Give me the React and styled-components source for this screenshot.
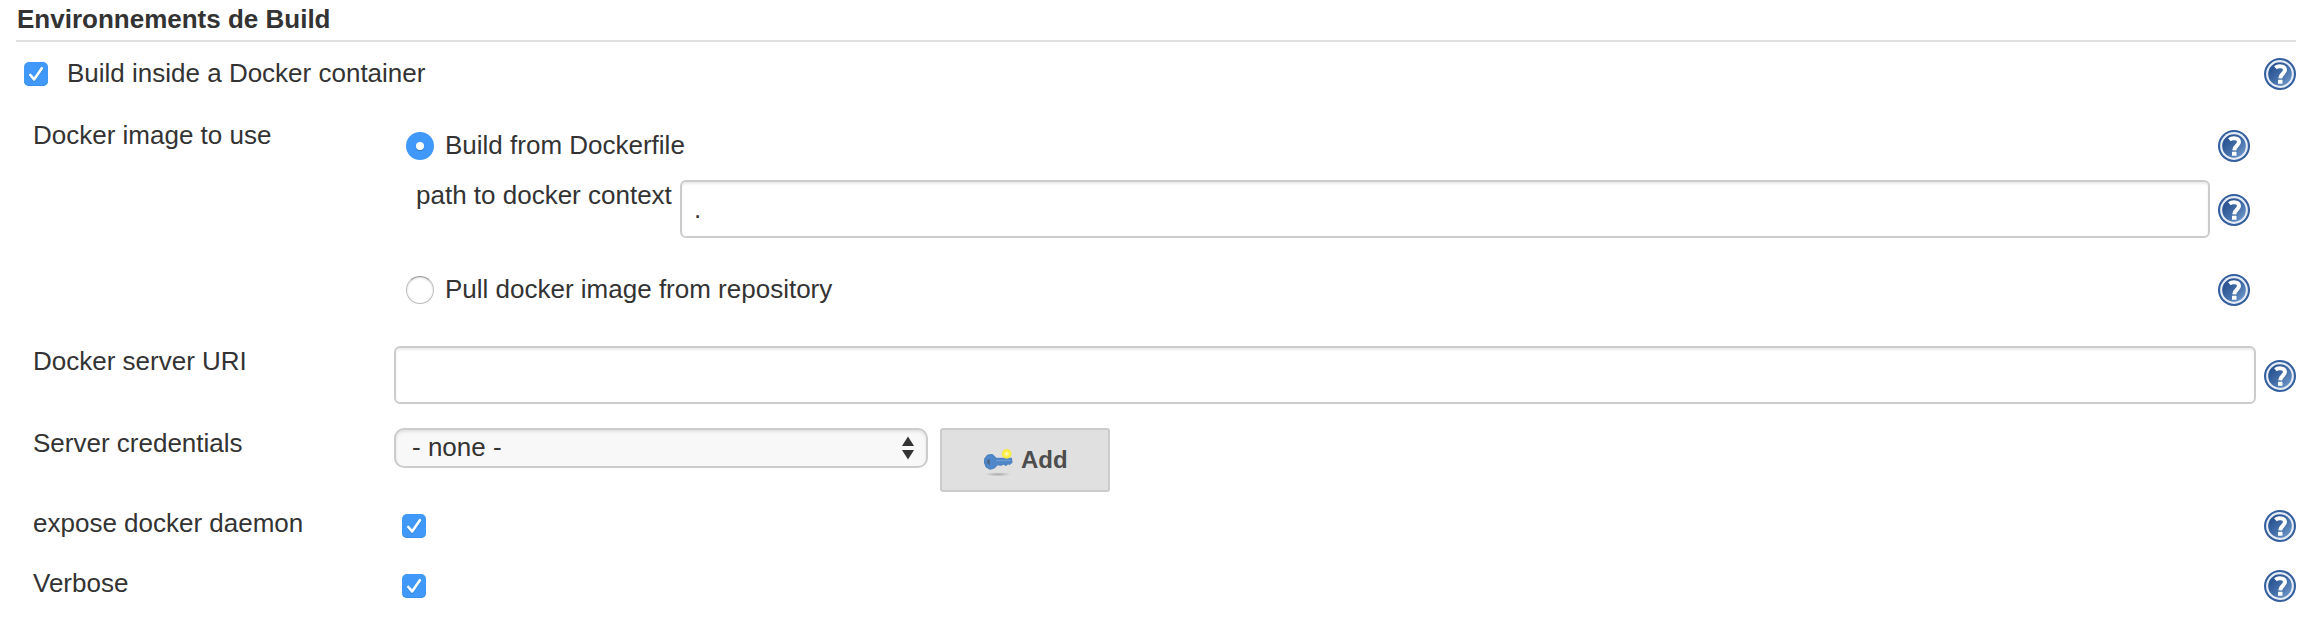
import React from "react";
import styled, { createGlobalStyle } from "styled-components";

const GlobalStyle = createGlobalStyle`
  *, *::before, *::after { box-sizing: border-box; }
  body {
    margin: 0;
    background: #fff;
    color: #333;
    font: 26px/30px "Liberation Sans", Helvetica, Arial, sans-serif;
  }
`;

const Page = styled.main`
  display: flex;
  flex-direction: column;
  height: 636px;
  padding: 0 22px 0 16px;
`;

const SectionHeader = styled.h2`
  margin: 0;
  height: 42px;
  padding: 4px 0 0 1px;
  border-bottom: 2px solid #e0e0e0;
  font-size: 26px;
  line-height: 30px;
  font-weight: bold;
`;

const ToggleRow = styled.div`
  display: flex;
  align-items: flex-start;
  height: 78px;
  padding: 16px 0 0 8px;
`;

const ToggleLabel = styled.label`
  flex: 1;
  display: flex;
  align-items: flex-start;
  gap: 19px;
`;

const Row = styled.div`
  display: grid;
  grid-template-columns: 361px minmax(0, 1fr) 40px;
  align-items: start;
  height: ${(p) => p.$height}px;
  padding-left: 17px;
`;

const Label = styled.span`
  white-space: nowrap;
`;

const HelpCell = styled.div`
  display: flex;
  flex: none;
  justify-content: flex-end;
  width: 40px;
  padding-top: ${(p) => p.$top || 0}px;
`;

const HelpSvg = styled.svg`
  display: block;
  width: 32px;
  height: 32px;
`;

const CheckBox = styled.span`
  display: block;
  width: 24px;
  height: 24px;
  margin: ${(p) => p.$margin || "0"};
  border-radius: 5px;
  background: #4099f8;
  box-shadow: inset 0 -1px 0 #3b8eed;

  svg { display: block; }
`;

const ImageOptions = styled.div`
  grid-column: 2 / 4;
  display: flex;
  flex-direction: column;
  padding: 10px 46px 0 0;
`;

const Option = styled.div`
  display: flex;
  align-items: flex-start;
  height: 50px;
  padding-left: 12px;
`;

const OptionLabel = styled.label`
  flex: 1;
  display: flex;
  gap: 11px;
`;

const Radio = styled.span`
  display: grid;
  place-items: center;
  width: 28px;
  height: 28px;
  margin-top: 2px;
  border-radius: 50%;
  background: ${(p) => (p.$checked ? "#4099f8" : "#fff")};
  border: ${(p) => (p.$checked ? "0" : "1px solid #bcbcbc")};
  border-top-color: #999;
  box-shadow: ${(p) => (p.$checked ? "none" : "inset 0 1px 2px #ddd")};

  &::after {
    content: "";
    width: 8px;
    height: 8px;
    border-radius: 50%;
    background: #fff;
    box-shadow: ${(p) => (p.$checked ? "0 1px 1px #2f78ca" : "none")};
  }
`;

const ContextRow = styled.div`
  display: flex;
  align-items: flex-start;
  height: 94px;
  padding-left: 22px;
`;

const ContextLabel = styled.span`
  flex: none;
  width: 264px;
  white-space: nowrap;
`;

const TextInput = styled.input`
  flex: 1;
  min-width: 0;
  width: 100%;
  height: 58px;
  padding: 12px;
  border: 2px solid #ccc;
  border-radius: 6px;
  outline: 0;
  background: #fff;
  box-shadow: inset 0 2px 2px rgba(0, 0, 0, 0.075);
  color: #333;
  font: 26px/30px "Liberation Sans", Helvetica, Arial, sans-serif;
`;

const Credentials = styled.div`
  display: flex;
  align-items: flex-start;
  gap: 12px;
`;

const SelectBox = styled.div`
  display: flex;
  justify-content: space-between;
  width: 534px;
  height: 40px;
  padding: 2px 12px 0 16px;
  border: 2px solid #ccc;
  border-radius: 10px;
  background: #f8f8f8;
  box-shadow: inset 0 2px 3px rgba(0, 0, 0, 0.09);

  svg { margin-top: 4px; }
`;

const AddButton = styled.button`
  display: flex;
  align-items: flex-start;
  width: 170px;
  height: 64px;
  padding: 14px 0 0 40px;
  border: 2px solid #ccc;
  border-radius: 3px;
  background: #e0e0e0;
  color: #4d4d4d;
  font: bold 24px/28px "Liberation Sans", Helvetica, Arial, sans-serif;

  span { padding: 2px 0 0 7px; }
`;

function Help() {
  return (
    <HelpSvg viewBox="0 0 32 32" role="img" aria-label="Help">
      <defs>
        <linearGradient id="helpFill" x1="0" y1="0" x2="1" y2="1">
          <stop offset="0.2" stopColor="#2c5593" />
          <stop offset="0.55" stopColor="#446fa9" />
          <stop offset="1" stopColor="#7ba3d0" />
        </linearGradient>
      </defs>
      <circle cx="16" cy="16" r="16" fill="#34609f" />
      <circle cx="16" cy="16" r="13.9" fill="#e6edf6" />
      <circle cx="16" cy="16" r="11.8" fill="url(#helpFill)" />
      <path
        d="M11.4 9.8C13.8 7.7 21 7.3 21 12.1C21 15.4 16.5 15.6 16.2 20.4"
        fill="none"
        stroke="#fff"
        strokeWidth="4"
      />
      <rect x="14" y="21.8" width="4.5" height="4" rx="0.6" fill="#fff" />
    </HelpSvg>
  );
}

function Check({ margin }) {
  return (
    <CheckBox $margin={margin} role="checkbox" aria-checked="true">
      <svg width="24" height="24" viewBox="0 0 24 24" fill="none" strokeLinecap="round" strokeLinejoin="round" strokeWidth="2.6">
        <path d="M6.3 14.3L10.1 18.7L17.9 7.4" stroke="#347fd2" strokeOpacity="0.6" />
        <path d="M6.3 13L10.1 17.4L17.9 6.2" stroke="#fff" />
      </svg>
    </CheckBox>
  );
}

function KeyIcon() {
  return (
    <svg width="32" height="32" viewBox="0 0 32 32" aria-hidden="true">
      <defs>
        <radialGradient id="keyShadow">
          <stop offset="0" stopColor="#999" stopOpacity="0.8" />
          <stop offset="1" stopColor="#999" stopOpacity="0" />
        </radialGradient>
        <radialGradient id="keySpark">
          <stop offset="0" stopColor="#fffce0" />
          <stop offset="0.45" stopColor="#fff04a" />
          <stop offset="0.8" stopColor="#f8e943" />
          <stop offset="1" stopColor="#f4e64a" stopOpacity="0" />
        </radialGradient>
      </defs>
      <ellipse cx="16" cy="30.3" rx="13" ry="2" fill="url(#keyShadow)" />
      <path
        d="M2.7 14.5L5.5 11L10.5 10.5L14.5 14.3H29.5L30 18.5L28 20.5L26 19.8L24 21.5L21.5 20.3L19 21.3L15.5 20.8L12.5 24L8 25.3L4 23L2.5 19Z"
        fill="#4f87c8"
        stroke="#3f78b9"
        strokeWidth="0.9"
        strokeLinejoin="round"
      />
      <path d="M14 16.5H28" stroke="#6b9cd5" strokeWidth="1.3" />
      <path d="M4.8 16.5L7.8 15V21L5.5 20Z" fill="#4b6787" />
      <circle cx="24.7" cy="9.8" r="5.4" fill="url(#keySpark)" />
    </svg>
  );
}

export default function App() {
  return (
    <>
      <GlobalStyle />
      <Page>
        <SectionHeader>Environnements de Build</SectionHeader>
        <ToggleRow>
          <ToggleLabel>
            <Check margin="4px 0 0" />
            Build inside a Docker container
          </ToggleLabel>
          <HelpCell><Help /></HelpCell>
        </ToggleRow>

        <Row $height={226}>
          <Label>Docker image to use</Label>
          <ImageOptions>
            <Option>
              <OptionLabel><Radio $checked />Build from Dockerfile</OptionLabel>
              <HelpCell><Help /></HelpCell>
            </Option>
            <ContextRow>
              <ContextLabel>path to docker context</ContextLabel>
              <TextInput defaultValue="." aria-label="path to docker context" />
              <HelpCell $top={14}><Help /></HelpCell>
            </ContextRow>
            <Option>
              <OptionLabel><Radio />Pull docker image from repository</OptionLabel>
              <HelpCell><Help /></HelpCell>
            </Option>
          </ImageOptions>
        </Row>

        <Row $height={82}>
          <Label>Docker server URI</Label>
          <TextInput aria-label="Docker server URI" />
          <HelpCell $top={14}><Help /></HelpCell>
        </Row>

        <Row $height={80}>
          <Label>Server credentials</Label>
          <Credentials>
            <SelectBox role="combobox" aria-expanded="false">
              - none -
              <svg width="12" height="24" viewBox="0 0 12 24" fill="#333">
                <path d="M6 0.5L12 10H0Z" />
                <path d="M0 14H12L6 23.5Z" />
              </svg>
            </SelectBox>
            <AddButton type="button"><KeyIcon /><span>Add</span></AddButton>
          </Credentials>
        </Row>

        <Row $height={60}>
          <Label>expose docker daemon</Label>
          <Check margin="6px 0 0 8px" />
          <HelpCell $top={2}><Help /></HelpCell>
        </Row>
        <Row $height={60}>
          <Label>Verbose</Label>
          <Check margin="6px 0 0 8px" />
          <HelpCell $top={2}><Help /></HelpCell>
        </Row>
      </Page>
    </>
  );
}
